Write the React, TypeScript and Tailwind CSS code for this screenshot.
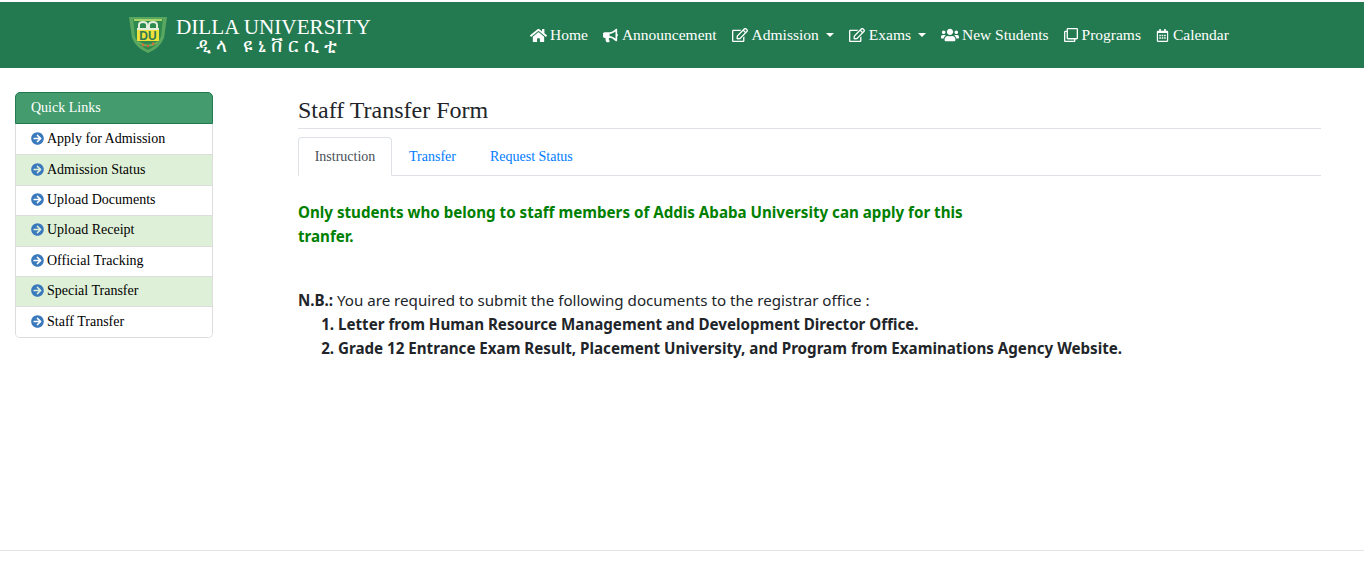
import { FaHome, FaBullhorn, FaRegEdit, FaUsers, FaRegClone, FaRegCalendarAlt, FaArrowCircleRight } from 'react-icons/fa';

const quickLinks = [
  'Apply for Admission',
  'Admission Status',
  'Upload Documents',
  'Upload Receipt',
  'Official Tracking',
  'Special Transfer',
  'Staff Transfer',
];

function Logo() {
  return (
    <svg width="40" height="38" viewBox="0 0 40 38" className="shrink-0">
      <path d="M1 1 L39 1 L36 22 Q32 32 20 37 Q8 32 4 22 Z" fill="#5aa860" />
      <path d="M5 3 L35 3 L33 21 Q29 30 20 34 Q11 30 7 21 Z" fill="#2f8a50" />
      <rect x="6" y="3" width="28" height="2" fill="#a9d468" />
      <path d="M11 12 V9 Q11 6 15 6 Q19 6 19 9 V12 M21 12 V9 Q21 6 25 6 Q29 6 29 9 V12" fill="none" stroke="#e4efdc" strokeWidth="2" />
      <rect x="9" y="12" width="22" height="2" fill="#e4efdc" />
      <rect x="9" y="14" width="22" height="11" fill="#eee13a" />
      <text x="20" y="24" textAnchor="middle" fontFamily="'Liberation Sans', sans-serif" fontWeight="700" fontSize="12" fill="#2f7a52">DU</text>
      <path d="M10 26 Q20 33 30 26" fill="none" stroke="#6fae5a" strokeWidth="2" />
      <circle cx="15" cy="29" r="1.4" fill="#d0703a" />
      <circle cx="20" cy="30" r="1.2" fill="#d9583a" />
      <circle cx="25" cy="28" r="1.4" fill="#d0703a" />
    </svg>
  );
}

function NavItem({ icon, label, caret, gap = 4 }: { icon: React.ReactNode; label: string; caret?: boolean; gap?: number }) {
  return (
    <a className="flex items-center text-white whitespace-nowrap">
      {icon}
      <span className={gap === 3 ? 'ml-[3px]' : 'ml-[4px]'}>{label}</span>
      {caret && <span className="ml-[7px] border-x-[4px] border-t-[4.5px] border-x-transparent border-t-white" />}
    </a>
  );
}

export default function App() {
  return (
    <div className="h-[566px] bg-white overflow-hidden font-['Liberation_Serif',serif]">
      <header className="mt-[2px] h-[66px] bg-[#237a50] flex items-center pl-[128px]">
        <div className="flex items-center w-[402px]">
          <Logo />
          <div className="ml-[8px] text-white text-center">
            <div className="text-[21.2px] leading-[19px]">DILLA UNIVERSITY</div>
            <div className="pr-[9px] text-[19px] leading-[16px] tracking-[5px] font-['DejaVu_Sans','Noto_Sans',sans-serif]">ዲላ ዩኒቨርሲቲ</div>
          </div>
        </div>
        <nav className="flex items-center gap-[15px] text-[15.5px]">
          <NavItem icon={<FaHome className="text-[17px]" />} label="Home" gap={3} />
          <NavItem icon={<FaBullhorn className="text-[15px]" />} label="Announcement" />
          <NavItem icon={<FaRegEdit className="text-[16px]" />} label="Admission" caret />
          <NavItem icon={<FaRegEdit className="text-[16px]" />} label="Exams" caret />
          <NavItem icon={<FaUsers className="text-[18px]" />} label="New Students" gap={3} />
          <NavItem icon={<FaRegClone className="text-[14px]" />} label="Programs" />
          <NavItem icon={<FaRegCalendarAlt className="text-[13px]" />} label="Calendar" />
        </nav>
      </header>

      <div className="flex h-[482px]">
        <aside className="ml-[15px] mt-[24px] w-[198px] shrink-0 self-start">
          <div className="h-[32px] bg-[#449b6d] border border-[#237a50] rounded-t-[5px] text-white text-[14px] pl-[15px] flex items-center pb-[2px]">
            Quick Links
          </div>
          <ul className="border-x border-b border-[#dddddd] rounded-b-[5px] overflow-hidden">
            {quickLinks.map((link, i) => (
              <li
                key={link}
                className={`h-[30.4px] flex items-center pl-[15px] text-[14px] text-black pb-[2px] ${i > 0 ? 'border-t border-[#dddddd]' : ''} ${i % 2 === 1 ? 'bg-[#dff0d8]' : 'bg-white'}`}
              >
                <FaArrowCircleRight className="text-[13px] text-[#3b79bd] mr-[3px] shrink-0" />
                {link}
              </li>
            ))}
          </ul>
        </aside>

        <main className="ml-[85px] w-[1023px] pt-[28px]">
          <h1 className="text-[24px] leading-[28px] text-[#212529] pb-[4px] border-b border-[#dee2e6]">Staff Transfer Form</h1>
          <div className="mt-[8px] flex border-b border-[#dee2e6] text-[14px] h-[39px]">
            <a className="h-[39px] w-[94px] flex items-center justify-center text-[#495057] bg-white border border-[#dee2e6] border-b-white rounded-t-[4px]">Instruction</a>
            <a className="h-[38px] px-[17px] flex items-center text-[#007bff]">Transfer</a>
            <a className="h-[38px] px-[17px] flex items-center text-[#007bff]">Request Status</a>
          </div>

          <div className="font-['Noto_Sans',sans-serif] text-[15.15px] leading-[24px] text-[#212529]">
            <p className="mt-[24px] w-[680px] font-bold text-[#008000]">
              Only students who belong to staff members of Addis Ababa University can apply for this tranfer.
            </p>
            <p className="mt-[40px]">
              <b className="font-bold">N.B.:</b> You are required to submit the following documents to the registrar office :
            </p>
            <ol className="list-decimal pl-[40px] font-bold">
              <li>Letter from Human Resource Management and Development Director Office.</li>
              <li>Grade 12 Entrance Exam Result, Placement University, and Program from Examinations Agency Website.</li>
            </ol>
          </div>
        </main>
      </div>

      <div className="border-t border-[#e4e4e4]" />
    </div>
  );
}
